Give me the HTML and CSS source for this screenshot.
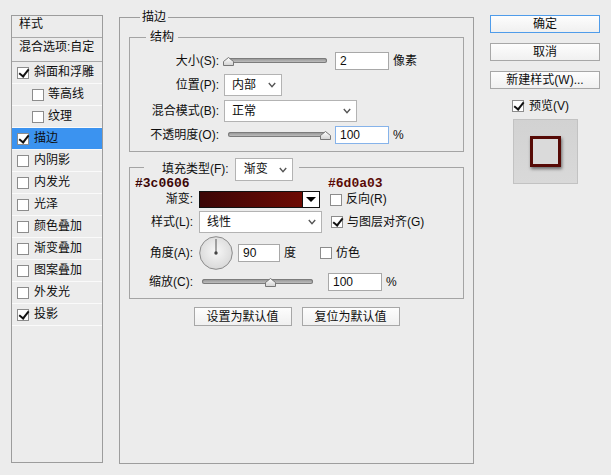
FILE: index.html
```html
<!DOCTYPE html>
<html lang="zh-CN">
<head>
    <meta charset="UTF-8">
    <meta name="viewport" content="width=device-width, initial-scale=1.0">
    <title>图层样式</title>
    <link rel="stylesheet" href="styles.css">
</head>
<body>
    <!-- shared slider thumb -->
    <svg width="0" height="0" class="defs">
        <defs>
            <linearGradient id="thumb-fill" x1="0" y1="0" x2="0" y2="1">
                <stop offset="0" stop-color="#ffffff"/>
                <stop offset="1" stop-color="#d2d2d2"/>
            </linearGradient>
            <radialGradient id="dial-fill" cx="0.5" cy="0.45" r="0.55">
                <stop offset="0" stop-color="#f7f7f7"/>
                <stop offset="1" stop-color="#d9d9d9"/>
            </radialGradient>
            <symbol id="thumb" viewBox="0 0 11 9">
                <polygon points="0.5,8.5 0.5,4.5 5.5,0.5 10.5,4.5 10.5,8.5" fill="url(#thumb-fill)" stroke="#777" stroke-width="1"/>
            </symbol>
            <symbol id="chevron" viewBox="0 0 8 6">
                <polyline points="0.8,1 4,4.6 7.2,1" fill="none" stroke="#555" stroke-width="1.4"/>
            </symbol>
        </defs>
    </svg>

    <div class="dialog">
        <!-- effect list -->
        <div class="fx-list">
            <div class="fx-head">样式</div>
            <div class="fx-head">混合选项:自定</div>
            <div class="fx-item"><span class="cb on"></span>斜面和浮雕</div>
            <div class="fx-item sub"><span class="cb"></span>等高线</div>
            <div class="fx-item sub"><span class="cb"></span>纹理</div>
            <div class="fx-item active"><span class="cb on"></span>描边</div>
            <div class="fx-item"><span class="cb"></span>内阴影</div>
            <div class="fx-item"><span class="cb"></span>内发光</div>
            <div class="fx-item"><span class="cb"></span>光泽</div>
            <div class="fx-item"><span class="cb"></span>颜色叠加</div>
            <div class="fx-item"><span class="cb"></span>渐变叠加</div>
            <div class="fx-item"><span class="cb"></span>图案叠加</div>
            <div class="fx-item"><span class="cb"></span>外发光</div>
            <div class="fx-item"><span class="cb on"></span>投影</div>
        </div>

        <!-- stroke settings -->
        <fieldset class="panel">
            <legend>描边</legend>

            <fieldset class="group structure">
                <legend>结构</legend>
                <div class="rows">
                    <div class="row">
                        <span class="label">大小(S):</span>
                        <div class="slider">
                            <div class="track"><svg class="thumb" style="left:1%"><use href="#thumb"/></svg></div>
                        </div>
                        <span class="field">2</span>
                        <span class="unit">像素</span>
                    </div>
                    <div class="row">
                        <span class="label">位置(P):</span>
                        <div class="select pos">内部<svg class="chev"><use href="#chevron"/></svg></div>
                    </div>
                    <div class="row">
                        <span class="label">混合模式(B):</span>
                        <div class="select mode">正常<svg class="chev"><use href="#chevron"/></svg></div>
                    </div>
                    <div class="row">
                        <span class="label">不透明度(O):</span>
                        <div class="slider">
                            <div class="track"><svg class="thumb" style="left:98%"><use href="#thumb"/></svg></div>
                        </div>
                        <span class="field focus">100</span>
                        <span class="unit">%</span>
                    </div>
                </div>
            </fieldset>

            <fieldset class="group fill">
                <legend>
                    <span>填充类型(F):</span>
                    <span class="select kind">渐变<svg class="chev"><use href="#chevron"/></svg></span>
                </legend>
                <div class="rows">
                    <div class="hex-row">
                        <span class="hex start">#3c0606</span>
                        <span class="hex end">#6d0a03</span>
                    </div>
                    <div class="row grad-row">
                        <span class="label">渐变:</span>
                        <div class="swatch">
                            <div class="ramp"></div>
                            <div class="drop"><span class="tri"></span></div>
                        </div>
                        <label class="check side"><span class="cb"></span>反向(R)</label>
                    </div>
                    <div class="row">
                        <span class="label">样式(L):</span>
                        <div class="select style">线性<svg class="chev"><use href="#chevron"/></svg></div>
                        <label class="check"><span class="cb on"></span>与图层对齐(G)</label>
                    </div>
                    <div class="row">
                        <span class="label">角度(A):</span>
                        <svg class="dial" width="34" height="34" viewBox="0 0 34 34">
                            <circle cx="17" cy="17" r="16.3" fill="url(#dial-fill)" stroke="#8a8a8a" stroke-width="1"/>
                            <line x1="17" y1="17" x2="17" y2="3" stroke="#555" stroke-width="1"/>
                            <circle cx="17" cy="17" r="1.7" fill="#444"/>
                        </svg>
                        <span class="field angle">90</span>
                        <span class="unit">度</span>
                        <label class="check dither"><span class="cb"></span>仿色</label>
                    </div>
                    <div class="row">
                        <span class="label">缩放(C):</span>
                        <div class="slider scale">
                            <div class="track"><svg class="thumb" style="left:62%"><use href="#thumb"/></svg></div>
                        </div>
                        <span class="field">100</span>
                        <span class="unit">%</span>
                    </div>
                </div>
            </fieldset>

            <div class="defaults">
                <button class="btn">设置为默认值</button>
                <button class="btn">复位为默认值</button>
            </div>
        </fieldset>

        <!-- dialog actions -->
        <div class="actions">
            <button class="btn primary">确定</button>
            <button class="btn">取消</button>
            <button class="btn">新建样式(W)...</button>
            <label class="check preview-toggle"><span class="cb on"></span>预览(V)</label>
            <div class="preview">
                <div class="preview-box"></div>
            </div>
        </div>
    </div>
</body>
</html>
```

FILE: styles.css
```css
/* General */
body {
    margin: 0;
    background-color: #ececec;
    font: 12px/15px "Liberation Sans", "Noto Sans CJK SC", sans-serif;
    color: #0e0e0e;
}

.defs {
    position: absolute;
}

.dialog {
    display: grid;
    grid-template-columns: 92px 355px 110px;
    column-gap: 16px;
    align-items: start;
    padding-left: 11px;
}

/* Checkbox */
.cb {
    position: relative;
    flex: none;
    width: 12px;
    height: 12px;
    box-sizing: border-box;
    border: 1px solid #8c8c8c;
    background-color: #fff;
}

.cb.on::after {
    content: "";
    position: absolute;
    left: 3px;
    top: -1px;
    width: 4px;
    height: 8px;
    border: solid #111;
    border-width: 0 2px 2px 0;
    transform: rotate(38deg);
}

.check {
    display: flex;
    align-items: center;
    gap: 4px;
}

/* Effect list */
.fx-list {
    margin-top: 15px;
    height: 448px;
    box-sizing: border-box;
    border: 1px solid #9c9c9c;
}

.fx-head {
    height: 21px;
    line-height: 16px;
    padding-left: 7px;
    border-bottom: 1px solid #a9a9a9;
}

.fx-head + .fx-head {
    height: 22px;
    padding-top: 1px;
}

.fx-item {
    display: flex;
    align-items: center;
    gap: 5px;
    height: 21px;
    padding-left: 5px;
    border-bottom: 1px solid #fafafa;
}

.fx-item.sub {
    padding-left: 20px;
    gap: 4px;
}

.fx-item.active {
    background-color: #3b93f0;
}

/* Group boxes */
.panel {
    margin: 10px 0 0;
    padding: 0;
    height: 454px;
    box-sizing: border-box;
    border: 1px solid #9d9d9d;
    min-width: 0;
}

.panel > legend {
    margin-left: 20px;
    padding: 0 2px;
}

.group {
    margin: 5px 9px 0;
    padding: 0;
    border: 1px solid #a4a4a4;
    min-width: 0;
}

.structure legend {
    margin-left: 16px;
    padding: 0 4px;
}

.structure .rows {
    display: flex;
    flex-direction: column;
    gap: 4px;
    padding: 7px 0 7px;
}

.row {
    display: flex;
    align-items: center;
}

.label {
    flex: none;
    text-align: right;
}

.structure .label {
    width: 89px;
    margin-right: 5px;
}

.unit {
    margin-left: 4px;
}

/* Inputs */
.field {
    flex: none;
    width: 54px;
    height: 18px;
    box-sizing: border-box;
    border: 1px solid #a8a8a8;
    background-color: #fff;
    padding-left: 4px;
    line-height: 16px;
    margin-left: 4px;
}

.field.focus {
    border-color: #86b3ea;
}

.select {
    display: flex;
    align-items: center;
    justify-content: space-between;
    height: 22px;
    box-sizing: border-box;
    border: 1px solid #b3b3b3;
    background-color: #fff;
    padding: 0 5px 0 7px;
}

.chev {
    width: 8px;
    height: 6px;
}

.select.pos {
    width: 58px;
}

.select.mode {
    width: 133px;
}

/* Sliders */
.slider {
    flex: none;
    width: 107px;
    height: 9px;
}

.track {
    position: relative;
    height: 5px;
    margin: 1px 4px 0;
    border-radius: 3px;
    background: linear-gradient(#8e8e8e, #c8c8c8);
    box-shadow: inset 0 0 0 1px #7c7c7c;
}

.thumb {
    position: absolute;
    top: -1px;
    width: 11px;
    height: 9px;
    margin-left: -5.5px;
}

.slider.scale {
    width: 119px;
}

.slider.scale .track {
    margin: 1px 5px 0 3px;
}

/* Fill group */
.fill {
    margin-top: 2px;
}

.fill legend {
    display: flex;
    align-items: center;
    margin-left: 14px;
    padding: 4px 6px 0 18px;
}

.select.kind {
    width: 58px;
    height: 23px;
    margin-left: 6px;
    padding-left: 8px;
}

.fill .rows {
    padding-bottom: 7px;
}

.fill .label {
    width: 63px;
    margin-right: 6px;
}

.hex-row {
    display: flex;
    margin-top: -3px;
    padding-left: 5px;
    font: bold 13px/12px "Liberation Mono", monospace;
}

.hex.start {
    width: 193px;
    color: #3c0606;
}

.hex.end {
    color: #5a0a05;
}

.grad-row {
    margin-top: 1px;
}

.swatch {
    display: flex;
    width: 121px;
    height: 17px;
    box-sizing: border-box;
    border: 1px solid #111;
    background-color: #fff;
}

.ramp {
    flex: 1;
    background: linear-gradient(to right, #3c0606, #6d0a03);
}

.drop {
    display: flex;
    align-items: center;
    justify-content: center;
    width: 16px;
    border-left: 1px solid #111;
}

.tri {
    width: 0;
    height: 0;
    border-left: 5px solid transparent;
    border-right: 5px solid transparent;
    border-top: 5px solid #000;
}

.check.side {
    margin-left: 10px;
}

.fill .row + .row {
    margin-top: 3px;
}

.select.style {
    width: 123px;
    margin-right: 9px;
}

.dial {
    flex: none;
    margin-right: 1px;
}

.field.angle {
    width: 42px;
}

.check.dither {
    margin-left: 24px;
}

.scale + .field {
    margin-left: 10px;
}

/* Buttons */
.btn {
    display: block;
    height: 18px;
    box-sizing: border-box;
    padding: 0;
    border: 1px solid #a7a7a7;
    background: linear-gradient(#fdfdfd, #f0f0f0);
    font: 12px/16px "Liberation Sans", "Noto Sans CJK SC", sans-serif;
    color: #0e0e0e;
    text-align: center;
}

.btn.primary {
    border-color: #4f9cea;
}

.defaults {
    display: flex;
    justify-content: center;
    gap: 10px;
    margin-top: 8px;
}

.defaults .btn {
    width: 98px;
    height: 19px;
}

/* Right column */
.actions {
    display: flex;
    flex-direction: column;
    margin-top: 15px;
}

.actions .btn + .btn {
    margin-top: 10px;
}

.preview-toggle {
    gap: 5px;
    height: 14px;
    margin-top: 10px;
    padding-left: 22px;
}

.preview {
    display: flex;
    align-items: center;
    justify-content: center;
    align-self: center;
    width: 65px;
    height: 65px;
    box-sizing: border-box;
    margin-top: 6px;
    border: 1px solid #c2c2c2;
    background: linear-gradient(#d2d2d2, #d9d9d9);
}

.preview-box {
    width: 31px;
    height: 31px;
    box-sizing: border-box;
    border: 3px solid #560a06;
    background-color: #dadada;
    box-shadow: 1px 2px 3px rgba(0, 0, 0, 0.5);
}
```
